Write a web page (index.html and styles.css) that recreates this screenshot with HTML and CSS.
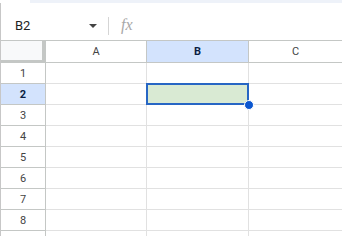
FILE: index.html
```
<!DOCTYPE html>
<html lang="en">
<head>
    <meta charset="UTF-8">
    <title>Sheet</title>
    <link rel="stylesheet" href="styles.css">
</head>
<body>
    <div class="top-strip"></div>
    <div class="app">
        <div class="formula-bar">
            <div class="name-box">B2</div>
            <div class="dropdown"></div>
            <div class="sep"></div>
            <div class="fx">fx</div>
        </div>
        <div class="sheet">
            <div class="corner"></div>
            <div class="col-head">A</div>
            <div class="col-head active">B</div>
            <div class="col-head">C</div>

            <div class="row-head">1</div><div class="cell"></div><div class="cell"></div><div class="cell"></div>
            <div class="row-head active">2</div><div class="cell"></div><div class="cell selected"><span class="handle"></span></div><div class="cell"></div>
            <div class="row-head">3</div><div class="cell"></div><div class="cell"></div><div class="cell"></div>
            <div class="row-head">4</div><div class="cell"></div><div class="cell"></div><div class="cell"></div>
            <div class="row-head">5</div><div class="cell"></div><div class="cell"></div><div class="cell"></div>
            <div class="row-head">6</div><div class="cell"></div><div class="cell"></div><div class="cell"></div>
            <div class="row-head">7</div><div class="cell"></div><div class="cell"></div><div class="cell"></div>
            <div class="row-head">8</div><div class="cell"></div><div class="cell"></div><div class="cell"></div>
            <div class="row-head"></div><div class="cell"></div><div class="cell"></div><div class="cell"></div>
        </div>
    </div>
</body>
</html>
```

FILE: styles.css
```
html, body {
    margin: 0;
    background: #fff;
    font-family: Roboto, "Liberation Sans", Arial, sans-serif;
    overflow: hidden;
}
.top-strip {
    height: 3px;
    margin-left: 30px;
    background: #eef2f9;
}
.app {
    border-left: 1px solid #c7c7c7;
}
.formula-bar {
    height: 37px;
    display: flex;
    align-items: center;
    box-sizing: border-box;
    padding-top: 8px;
}
.name-box {
    width: 74px;
    padding-left: 14px;
    font-size: 13px;
    color: #1f1f1f;
}
.dropdown {
    width: 0;
    height: 0;
    border-left: 4px solid transparent;
    border-right: 4px solid transparent;
    border-top: 4px solid #444;
}
.sep {
    width: 1px;
    height: 18px;
    background: #d5d5d5;
    margin-left: 11px;
}
.fx {
    margin-left: 12px;
    font-family: "Liberation Serif", serif;
    font-style: italic;
    font-size: 16px;
    color: #a8a8a8;
    padding-bottom: 2px;
}
.sheet {
    display: grid;
    grid-template-columns: 45px 101px 102px 94px;
    grid-template-rows: 22px;
    grid-auto-rows: 21px;
    border-top: 1px solid #c4c7c5;
}
.corner {
    background: #f8f9fa;
    border-right: 4px solid #c4c7c5;
    border-bottom: 3px solid #c4c7c5;
}
.col-head {
    display: flex;
    align-items: center;
    justify-content: center;
    font-size: 11px;
    color: #444;
    border-right: 1px solid #c4c7c5;
    border-bottom: 1px solid #c4c7c5;
}
.col-head.active {
    background: #d3e3fd;
    color: #0b1f44;
    font-weight: bold;
}
.row-head {
    display: flex;
    align-items: center;
    justify-content: center;
    font-size: 11px;
    color: #444;
    border-right: 1px solid #c4c7c5;
    border-bottom: 1px solid #c4c7c5;
}
.row-head.active {
    background: #d3e3fd;
    color: #0b1f44;
    font-weight: bold;
}
.cell {
    border-right: 1px solid #e1e1e1;
    border-bottom: 1px solid #e1e1e1;
}
.cell.selected {
    position: relative;
    background: #d9ead3;
}
.cell.selected::after {
    content: "";
    position: absolute;
    top: -1px;
    left: -1px;
    right: -1px;
    bottom: -1px;
    border: 2px solid #2766c4;
}
.handle {
    position: absolute;
    right: -6px;
    bottom: -6px;
    width: 8px;
    height: 8px;
    border-radius: 50%;
    background: #0b57d0;
    border: 1px solid #fff;
    z-index: 2;
}
```
